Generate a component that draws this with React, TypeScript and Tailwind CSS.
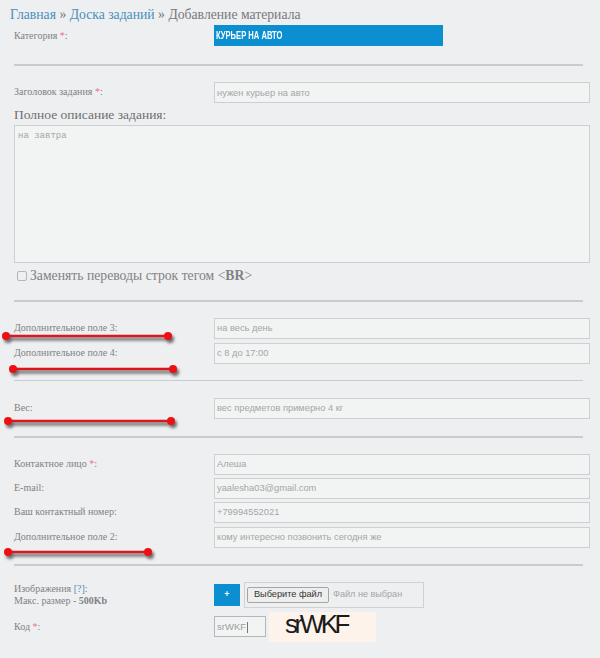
const serif = "font-['Liberation_Serif',serif]";
const sans = "font-['Liberation_Sans',sans-serif]";

function Star() {
  return <span className="text-[#ee7080]">*</span>;
}

function Field({ label, value, className }: { label: React.ReactNode; value: string; className: string }) {
  return (
    <div className={`flex items-center ${className}`}>
      <div className={`w-[200px] pb-[2px] text-[10px] text-[#808284] ${serif}`}>{label}</div>
      <div className={`flex h-[21px] w-[376px] items-center border border-[#cdd0d2] bg-[#f2f3f3] px-[2px] pt-[2px] text-[9.3px] text-[#a4a6a8] ${sans}`}>
        {value}
      </div>
    </div>
  );
}

function Rule({ className }: { className: string }) {
  return <div className={`w-[569px] bg-[#c8cccd] ${className}`} />;
}

function Strike({ x1, x2, y }: { x1: number; x2: number; y: number }) {
  return (
    <g>
      <g opacity="0.55" transform="translate(2 3)" filter="url(#blur)">
        <line x1={x1} x2={x2} y1={y} y2={y} stroke="#000" strokeWidth="3" />
        <circle cx={x1} cy={y} r="4" fill="#000" />
        <circle cx={x2} cy={y} r="4" fill="#000" />
      </g>
      <line x1={x1} x2={x2} y1={y} y2={y} stroke="#d9171c" strokeWidth="2.5" />
      <circle cx={x1} cy={y} r="4" fill="#ee0f14" />
      <circle cx={x2} cy={y} r="4" fill="#ee0f14" />
    </g>
  );
}

export default function App() {
  return (
    <div className="relative h-[658px] w-[600px] overflow-hidden bg-[#edeff0] pl-[14px]">
      <div className={`-ml-[4px] flex h-[25px] items-end pb-[3px] text-[13.7px] leading-none text-[#77797b] ${serif}`}>
        <span>
          <span className="text-[#4a90bd]">Главная</span> » <span className="text-[#4a90bd]">Доска заданий</span> » Добавление материала
        </span>
      </div>

      <div className="flex items-start">
        <div className={`w-[200px] pt-[3px] text-[10px] text-[#808284] ${serif}`}>
          Категория <Star />:
        </div>
        <div className={`flex h-[21px] w-[229px] items-center bg-[#0b8fd0] pl-[2px] text-[10px] font-bold text-white ${sans}`}>
          <span className="origin-left scale-x-[0.76] whitespace-nowrap">КУРЬЕР НА АВТО</span>
        </div>
      </div>

      <Rule className="mt-[18px] h-[2px]" />

      <Field className="mt-[16px]" label={<>Заголовок задания <Star />:</>} value="нужен курьер на авто" />

      <div className={`flex h-[22px] items-center pt-[2px] text-[13.5px] text-[#6e7072] ${serif}`}>Полное описание задания:</div>

      <div className="flex h-[138px] w-[576px] border border-[#cdd0d2] bg-[#f2f3f3] px-[3px] pt-[4px] font-['Liberation_Mono',monospace] text-[9px] leading-[12px] text-[#a4a6a8]">
        на завтра
      </div>

      <div className={`mt-[3px] flex items-center gap-[3px] pl-[3px] text-[13.7px] text-[#808284] ${serif}`}>
        <span className="h-[10px] w-[10px] rounded-[2px] border border-[#b4b6b8] bg-[#f0f0f0]" />
        <span>
          Заменять переводы строк тегом &lt;<b>BR</b>&gt;
        </span>
      </div>

      <Rule className="mt-[13px] h-[2px]" />

      <Field className="mt-[16px]" label="Дополнительное поле 3:" value="на весь день" />
      <Field className="mt-[4px]" label="Дополнительное поле 4:" value="с 8 до 17:00" />

      <Rule className="mt-[16px] h-px" />

      <Field className="mt-[17px]" label="Вес:" value="вес предметов примерно 4 кг" />

      <Rule className="mt-[17px] h-[2px]" />

      <Field className="mt-[16px]" label={<>Контактное лицо <Star />:</>} value="Алеша" />
      <Field className="mt-[3px]" label="E-mail:" value="yaalesha03@gmail.com" />
      <Field className="mt-[3px]" label="Ваш контактный номер:" value="+79994552021" />
      <Field className="mt-[4px]" label="Дополнительное поле 2:" value="кому интересно позвонить сегодня же" />

      <Rule className="mt-[16px] h-[2px]" />

      <div className="mt-[16px] flex items-center">
        <div className={`w-[200px] text-[10px] leading-[12px] text-[#808284] ${serif}`}>
          Изображения <span className="text-[#4a90bd]">[?]</span>:
          <br />
          Макс. размер - <b>500Kb</b>
        </div>
        <div className={`flex h-[22px] w-[26px] items-center justify-center bg-[#0b8fd0] text-[9px] font-bold text-white ${sans}`}>+</div>
        <div className={`ml-[4px] flex h-[26px] w-[180px] items-center gap-[4px] border border-[#cfd2d4] pl-[2px] ${sans}`}>
          <span className="flex h-[16px] w-[82px] items-center justify-center rounded-[2px] border border-[#a5a5a5] bg-[#eeeeee] text-[9.2px] text-[#333]">
            Выберите файл
          </span>
          <span className="text-[9.1px] text-[#a4a6a8]">Файл не выбран</span>
        </div>
      </div>

      <div className="mt-[4px] flex items-center">
        <div className={`w-[200px] text-[10px] text-[#808284] ${serif}`}>
          Код <Star />:
        </div>
        <div className={`flex h-[21px] w-[52px] items-center border border-[#b4b7b9] bg-[#f2f3f3] px-[2px] pt-[1px] text-[9.5px] text-[#9a9c9e] ${sans}`}>
          srWKF<span className="ml-px h-[11px] w-px bg-[#777]" />
        </div>
        <div className={`ml-[3px] flex h-[30px] w-[107px] items-center bg-[#fdf3ea] pb-[6px] pl-[16px] text-[26px] leading-none tracking-[-3.5px] text-[#1a1a1a] ${sans}`}>
          srWKF
        </div>
      </div>

      <svg className="pointer-events-none absolute left-0 top-0" width="600" height="658">
        <defs>
          <filter id="blur" x="-10%" y="-300%" width="120%" height="700%">
            <feGaussianBlur stdDeviation="1.5" />
          </filter>
        </defs>
        <Strike x1={6} x2={168} y={336} />
        <Strike x1={13} x2={173} y={369} />
        <Strike x1={8} x2={171} y={421} />
        <Strike x1={8} x2={148} y={552} />
      </svg>
    </div>
  );
}
